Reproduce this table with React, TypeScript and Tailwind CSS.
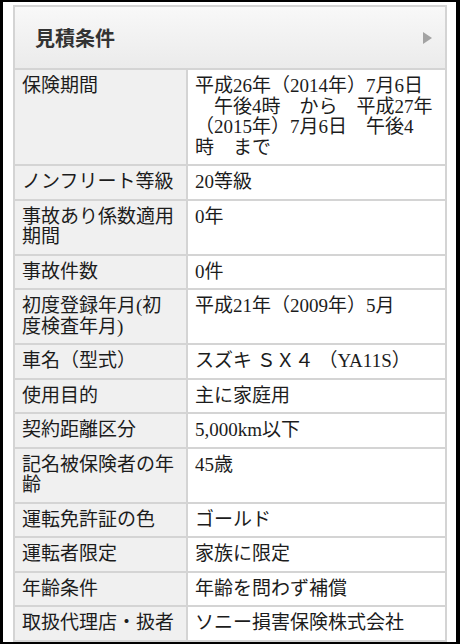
const rows: { label: string; value: React.ReactNode }[] = [
  {
    label: "保険期間",
    value: (
      <>
        {"平成26年（2014年）7月6日"}
        <br />
        {"　午後4時　から　平成27年"}
        <br />
        {"（2015年）7月6日　午後4"}
        <br />
        {"時　まで"}
      </>
    ),
  },
  { label: "ノンフリート等級", value: "20等級" },
  { label: "事故あり係数適用期間", value: "0年" },
  { label: "事故件数", value: "0件" },
  { label: "初度登録年月(初度検査年月)", value: "平成21年（2009年）5月" },
  { label: "車名（型式）", value: "スズキ ＳＸ４ （YA11S）" },
  { label: "使用目的", value: "主に家庭用" },
  { label: "契約距離区分", value: "5,000km以下" },
  { label: "記名被保険者の年齢", value: "45歳" },
  { label: "運転免許証の色", value: "ゴールド" },
  { label: "運転者限定", value: "家族に限定" },
  { label: "年齢条件", value: "年齢を問わず補償" },
  { label: "取扱代理店・扱者", value: "ソニー損害保険株式会社" },
];

const App = () => {
  return (
    <div
      className="w-[460px] h-[644px] overflow-hidden bg-white border-l-[3px] border-r-[4px] border-t-2 border-b-2 border-black"
      style={{ fontFamily: '"Liberation Serif", "Noto Sans CJK JP", serif' }}
    >
      <div className="ml-[10px] mr-[9px] mt-[3px] border-2 border-[#d4d4d4] text-[#1c1c1c]">
        {/* ヘッダー */}
        <div className="h-[63px] flex items-center justify-between pl-[20px] pr-[13px] bg-gradient-to-b from-[#f8f8f8] to-[#ebebeb] border-b-2 border-[#d4d4d4]">
          <h2
            className="text-[20px] font-bold text-[#333]"
            style={{ fontFamily: '"Noto Sans CJK JP", sans-serif' }}
          >
            見積条件
          </h2>
          <svg width="9" height="12" viewBox="0 0 9 12">
            <path d="M0 0 L9 6 L0 12 Z" fill="#a3a3a3" />
          </svg>
        </div>

        {rows.map((row, i) => (
          <div
            key={row.label}
            className={
              "flex text-[19px] leading-[20.5px] " +
              (i < rows.length - 1 ? "border-b-2 border-[#d4d4d4]" : "")
            }
          >
            <div className="w-[173px] shrink-0 bg-[#f0f0f0] border-r-2 border-[#d4d4d4] pl-[7px] pr-[8px] py-[6px]">
              {row.label}
            </div>
            <div className="flex-1 bg-white pl-[7px] pr-[4px] py-[6px] whitespace-pre">{row.value}</div>
          </div>
        ))}
      </div>
    </div>
  );
};

export default App;
